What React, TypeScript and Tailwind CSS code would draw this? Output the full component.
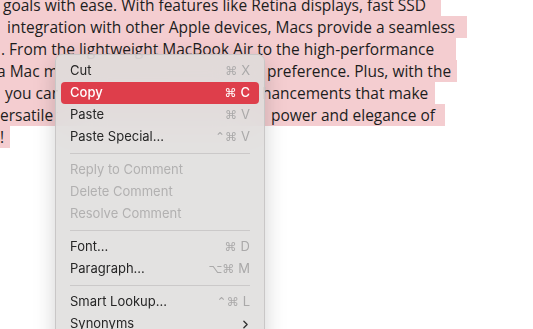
import { ChevronRight } from 'lucide-react'

type Item =
  | { kind: 'sep' }
  | { kind: 'item'; label: string; keys?: string[]; disabled?: boolean; active?: boolean; submenu?: boolean }

const items: Item[] = [
  { kind: 'item', label: 'Cut', keys: ['⌘', 'X'] },
  { kind: 'item', label: 'Copy', keys: ['⌘', 'C'], active: true },
  { kind: 'item', label: 'Paste', keys: ['⌘', 'V'] },
  { kind: 'item', label: 'Paste Special...', keys: ['⌃⌘', 'V'] },
  { kind: 'sep' },
  { kind: 'item', label: 'Reply to Comment', disabled: true },
  { kind: 'item', label: 'Delete Comment', disabled: true },
  { kind: 'item', label: 'Resolve Comment', disabled: true },
  { kind: 'sep' },
  { kind: 'item', label: 'Font...', keys: ['⌘', 'D'] },
  { kind: 'item', label: 'Paragraph...', keys: ['⌥⌘', 'M'] },
  { kind: 'sep' },
  { kind: 'item', label: 'Smart Lookup...', keys: ['⌃⌘', 'L'] },
  { kind: 'item', label: 'Synonyms', submenu: true },
]

// highlight width, start offset of the text, and for lines under the menu the part that shows right of it
const lines = [
  { w: 441, pl: 3, left: 'goals with ease. With features like Retina displays, fast SSD' },
  { w: 467, pl: 7, left: 'integration with other Apple devices, Macs provide a seamless' },
  { w: 456, pl: 1, left: '. From the lightweight MacBook Air to the high-performance' },
  { w: 457, pl: -3, left: 'a Mac model', split: 267, right: 'preference. Plus, with the' },
  { w: 435, pl: 5, left: 'you can enjoy', split: 262, right: 'hancements that make' },
  { w: 445, pl: 0, left: 'ersatile tool', split: 271, right: 'power and elegance of' },
  { w: 10, pl: 0, left: '!' },
]

function Line({ line }: { line: (typeof lines)[number] }) {
  const start = { paddingLeft: Math.max(line.pl, 0), marginLeft: Math.min(line.pl, 0) }
  return (
    <div className="h-[22px] bg-[#f4cdd0] flex items-center overflow-hidden whitespace-nowrap" style={{ width: line.w }}>
      {line.split ? (
        <>
          <div className="shrink-0 w-[58px] overflow-hidden" style={start}>
            {line.left}
          </div>
          <div className="shrink-0" style={{ marginLeft: line.split - 58 - Math.min(line.pl, 0) }}>
            {line.right}
          </div>
        </>
      ) : (
        <div className="shrink-0" style={start}>
          {line.left}
        </div>
      )}
    </div>
  )
}

export default function App() {
  return (
    <div className="relative w-[533px] h-[329px] overflow-hidden bg-white">
      <div className="-mt-[6px] text-[15.5px] leading-[22px] text-[#1d1d1d] font-['Open_Sans',sans-serif]">
        {lines.map((l, i) => (
          <Line key={i} line={l} />
        ))}
      </div>

      <div className="absolute left-[55px] top-[54px] w-[210px] h-[300px] rounded-[7px] border border-[#c9c7c7] bg-[rgba(222,220,219,0.84)] backdrop-blur-xl shadow-[0_6px_22px_rgba(0,0,0,0.18)] p-[5px] font-['Inter','DejaVu_Sans',sans-serif] text-[13px]">
        {items.map((it, i) =>
          it.kind === 'sep' ? (
            <div key={i} className="h-[11px] flex items-center px-[9px]">
              <div className="h-px w-full bg-[#cbc9c9]" />
            </div>
          ) : (
            <div
              key={i}
              className={`h-[22px] px-[9px] rounded-[4px] flex items-center justify-between ${
                it.active ? 'bg-[#de3e4b] text-white font-medium' : it.disabled ? 'text-[#b2b1b1]' : 'text-[#262626]'
              }`}
            >
              <span>{it.label}</span>
              {it.keys && (
                <span className={`flex items-center gap-[4px] font-['DejaVu_Sans',sans-serif] text-[12px] ${it.active ? 'text-white' : 'text-[#aaa9a9]'}`}>
                  <span>{it.keys[0]}</span>
                  <span className="font-['Inter',sans-serif] text-[13px]">{it.keys[1]}</span>
                </span>
              )}
              {it.submenu && <ChevronRight className="w-[13px] h-[13px] text-[#333] mr-[-2px]" strokeWidth={2.5} />}
            </div>
          )
        )}
      </div>
    </div>
  )
}
